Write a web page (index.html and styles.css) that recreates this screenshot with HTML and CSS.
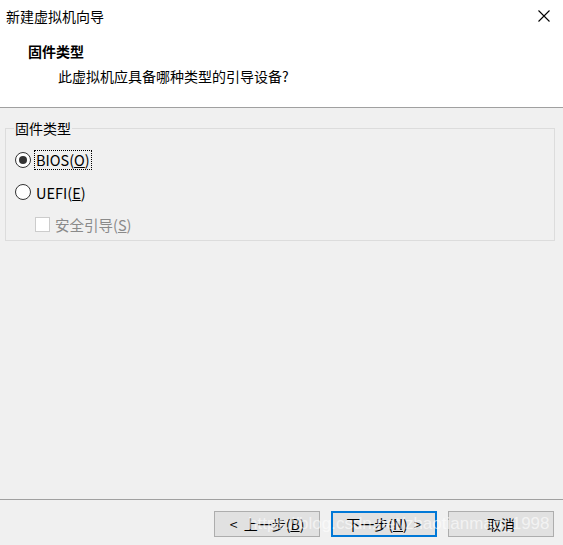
FILE: index.html
```html
<!DOCTYPE html>
<html lang="zh-CN">
<head>
    <meta charset="UTF-8">
    <title>新建虚拟机向导</title>
    <link rel="stylesheet" href="styles.css">
</head>
<body>
    <section class="wizard">
        <header class="top">
            <div class="titlebar">
                <span class="title">新建虚拟机向导</span>
                <svg class="close" width="12" height="12" viewBox="0 0 12 12">
                    <path d="M0.5 0.5 L11.5 11.5 M11.5 0.5 L0.5 11.5" stroke="#000" stroke-width="1.1" fill="none"/>
                </svg>
            </div>
            <p class="heading">固件类型</p>
            <p class="desc">此虚拟机应具备哪种类型的引导设备?</p>
        </header>

        <div class="content">
            <fieldset class="group">
                <legend>固件类型</legend>
                <!-- firmware choices -->
                <label class="option">
                    <span class="radio checked"></span>
                    <span class="focus">BIOS(<u>O</u>)</span>
                </label>
                <label class="option">
                    <span class="radio"></span>
                    <span class="text">UEFI(<u>E</u>)</span>
                </label>
                <label class="option sub disabled">
                    <span class="check"></span>
                    <span class="text">安全引导(<u>S</u>)</span>
                </label>
            </fieldset>
        </div>

        <footer class="bottom">
            <button class="btn">&lt;&nbsp; 上一步(<u>B</u>)</button>
            <button class="btn default">下一步(<u>N</u>) &nbsp;&gt;</button>
            <button class="btn">取消</button>
            <span class="watermark">https://blog.csdn.net/zhaotianmao_1998</span>
        </footer>
    </section>
</body>
</html>
```

FILE: styles.css
```css
*{
    padding: 0;
    margin: 0;
    box-sizing: border-box;
}
body{
    background-color: #f0f0f0;
    font-family: "Noto Sans CJK SC", "Noto Sans", sans-serif;
    font-size: 14px;
    color: #000;
}
.wizard{
    width: 563px;
    height: 545px;
    display: flex;
    flex-direction: column;
}

/* white header */
.top{
    background-color: #fff;
    height: 108px;
    border-bottom: 1px solid #a0a0a0;
}
.titlebar{
    display: flex;
    justify-content: space-between;
    align-items: center;
    height: 32px;
    padding: 0 13px 0 6px;
}
.title{
    font-size: 14px;
}
.heading{
    font-weight: bold;
    padding-left: 28px;
    margin-top: 9px;
    line-height: 20px;
}
.desc{
    padding-left: 58px;
    margin-top: 5px;
    line-height: 20px;
}

/* group box */
.content{
    flex: 1;
    padding: 10px 8px 0 5px;
}
.group{
    border: 1px solid #dcdcdc;
    padding: 6px 9px 4px 9px;
    height: 123px;
}
.group legend{
    padding: 0 1px;
    margin-left: -1px;
    line-height: 20px;
}
.option{
    display: flex;
    align-items: center;
    height: 32px;
    gap: 4px;
}
.radio{
    width: 16px;
    height: 16px;
    border: 1px solid #333;
    border-radius: 50%;
    background-color: #fff;
    display: flex;
    justify-content: center;
    align-items: center;
}
.radio.checked::after{
    content: "";
    width: 8px;
    height: 8px;
    border-radius: 50%;
    background-color: #333;
}
.focus{
    outline: 1px dotted #000;
    padding: 0 1px;
    line-height: 18px;
    font-size: 14.5px;
}
.text{
    padding: 0 1px;
    font-size: 14.5px;
}
.sub{
    padding-left: 20px;
}
.check{
    width: 15px;
    height: 15px;
    border: 1px solid #ccc;
    background-color: #fff;
}
.disabled{
    color: #8a8a8a;
}

/* buttons */
.bottom{
    position: relative;
    height: 46px;
    border-top: 1px solid #a0a0a0;
    display: flex;
    justify-content: flex-end;
    align-items: flex-start;
    gap: 11px;
    padding: 11px 9px 0 0;
}
.btn{
    width: 106px;
    height: 26px;
    font: inherit;
    background-color: #e1e1e1;
    border: 1px solid #adadad;
    color: #000;
}
.btn.default{
    border: 2px solid #0078d7;
}
.watermark{
    position: absolute;
    left: 248px;
    top: 14px;
    font-family: "Liberation Sans", Arial, sans-serif;
    font-size: 17px;
    color: rgba(255, 255, 255, 0.6);
    pointer-events: none;
}
```
